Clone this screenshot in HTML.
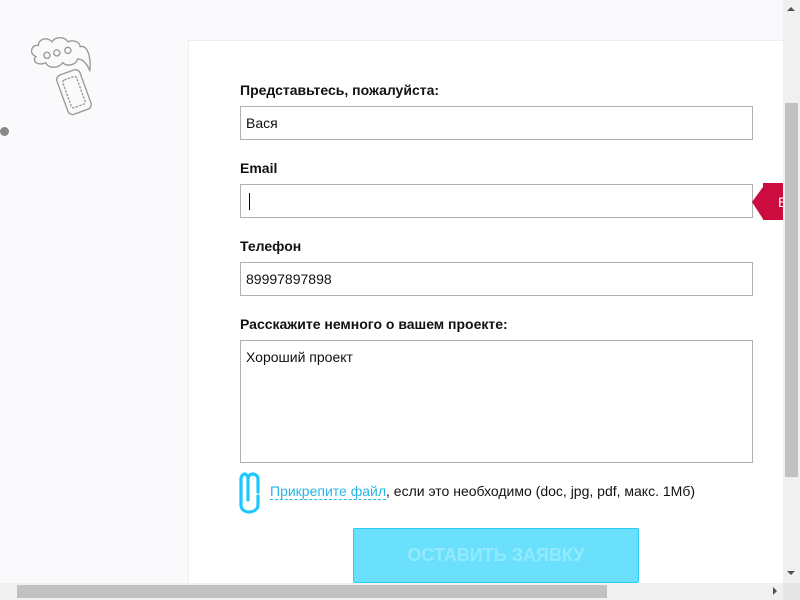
<!DOCTYPE html>
<html><head><meta charset="utf-8"><style>
body{margin:0;width:800px;height:600px;overflow:hidden;background:#fafafc;font-family:"Liberation Sans",Arial,sans-serif;position:relative}
.panel{position:absolute;left:188px;top:40px;width:595px;height:543px;background:#fff;border-left:1px solid #eee;border-top:1px solid #eee}
.lbl{position:absolute;left:240px;font-size:14px;font-weight:bold;color:#111}
.inp{position:absolute;left:240px;width:513px;border:1px solid #b0b0b0;background:#fff;font-size:14px;color:#111;box-sizing:border-box;padding-left:5px}
.vs{position:absolute;left:783px;top:0;width:17px;height:583px;background:#f0f0f0}
.hs{position:absolute;left:0;top:583px;width:783px;height:17px;background:#f0f0f0}
.corner{position:absolute;left:783px;top:583px;width:17px;height:17px;background:#e6e6e6}
</style></head><body>
<svg style="position:absolute;left:26px;top:32px" width="80" height="92" viewBox="0 0 65 75" fill="none" stroke="#999" stroke-width="1.1">
<path d="M8 20 C2 18 4 10 10 11 C10 5 18 4 21 8 C24 3 32 4 34 8 C38 6 44 8 44 12 C50 10 53 20 52 32 C50 26 46 22 42 22 C40 28 32 28 30 25 C26 30 18 30 16 25 C10 28 4 24 8 20Z"/>
<circle cx="17" cy="19" r="2.5"/><circle cx="25" cy="17" r="2.5"/><circle cx="34" cy="15" r="2.5"/>
<rect x="29" y="32" width="20" height="34" rx="4" transform="rotate(-20 39 49)"/>
<rect x="33" y="37" width="12" height="24" rx="2" transform="rotate(-20 39 49)" stroke-dasharray="2 1"/>
</svg>
<div style="position:absolute;left:0;top:127px;width:9px;height:9px;border-radius:50%;background:#888"></div>
<div class="panel"></div>
<div class="lbl" style="top:82px">Представьтесь, пожалуйста:</div>
<div class="inp" style="top:106px;height:34px;line-height:32px">Вася</div>
<div class="lbl" style="top:160px">Email</div>
<div class="inp" style="top:184px;height:34px"><div style="position:absolute;left:8px;top:8px;width:1px;height:17px;background:#000"></div></div>
<svg style="position:absolute;left:752px;top:183px" width="31" height="38"><path d="M11 0H31V37H11V36L0 19L11 4Z" fill="#cc0c3f"/><text x="26" y="24" fill="#fff" font-size="14" font-family="Liberation Sans">E</text></svg>
<div class="lbl" style="top:238px">Телефон</div>
<div class="inp" style="top:262px;height:34px;line-height:32px">89997897898</div>
<div class="lbl" style="top:316px">Расскажите немного о вашем проекте:</div>
<div class="inp" style="top:340px;height:123px;padding-top:8px">Хороший проект</div>
<svg style="position:absolute;left:239px;top:472px" width="26" height="42" fill="none" stroke="#1ec8ff" stroke-width="3.2" stroke-linecap="round"><path d="M19 20V7C19 4 16 2 14 2C11 2 9 4 9 7V28M9 7C9 4 7 2 6 2C4 2 2 4 2 7V33C2 37 5 40 10 40C15 40 19 37 19 33V24"/></svg>
<div style="position:absolute;left:270px;top:483px;font-size:14px;color:#111"><span style="color:#29b6e8;border-bottom:1px dashed #29b6e8">Прикрепите файл</span>, если это необходимо (doc, jpg, pdf, макс. 1Мб)</div>
<div style="position:absolute;left:353px;top:528px;width:286px;height:55px;background:#6ae0fc;border:1px solid #2bcdf6;border-radius:2px;box-sizing:border-box;text-align:center;line-height:53px;color:#92eafc;font-weight:bold;font-size:18px">ОСТАВИТЬ ЗАЯВКУ</div>
<div class="vs"><div style="position:absolute;left:2px;top:103px;width:13px;height:374px;background:#c1c1c1"></div>
<div style="position:absolute;left:4px;top:7px;border:4px solid transparent;border-bottom:4px solid #505050;border-top:0"></div>
<div style="position:absolute;left:4px;top:571px;border:4px solid transparent;border-top:4px solid #505050;border-bottom:0"></div></div>
<div class="hs"><div style="position:absolute;left:17px;top:2px;width:590px;height:13px;background:#c1c1c1"></div>
<div style="position:absolute;left:773px;top:4px;border:4px solid transparent;border-left:4px solid #505050;border-right:0"></div></div>
<div class="corner"></div>
</body></html>
